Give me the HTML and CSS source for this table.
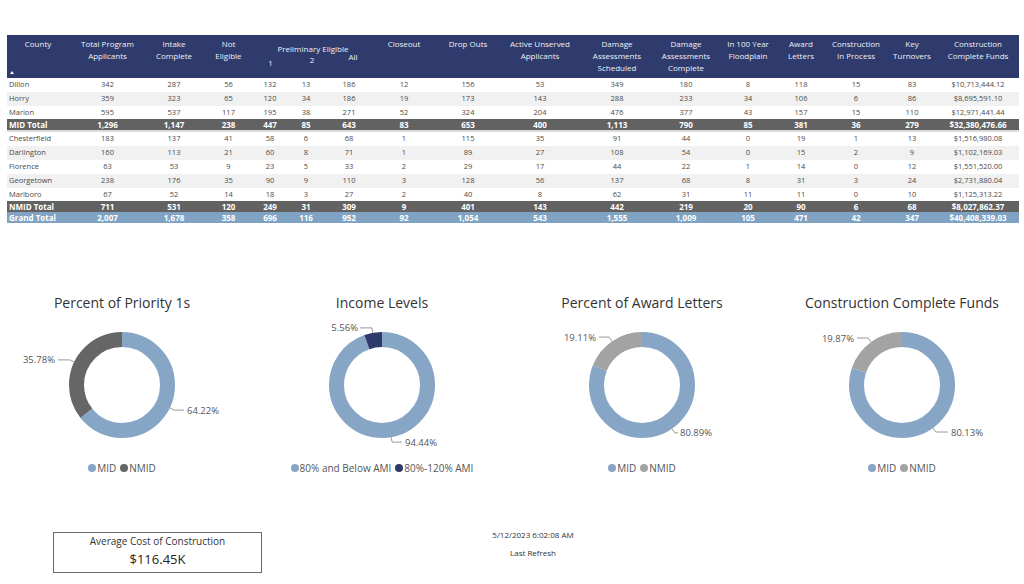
FILE: index.html
```html
<!DOCTYPE html>
<html lang="en">
<head>
<meta charset="utf-8">
<title>Program Dashboard</title>
<link rel="stylesheet" href="styles.css">
</head>
<body>
<section class="matrix">
  <div class="row head">
    <div class="h county"><span>County</span><span class="sort"></span></div>
    <div class="h">Total Program<br>Applicants</div>
    <div class="h">Intake<br>Complete</div>
    <div class="h">Not<br>Eligible</div>
    <div class="group">
      <div class="gtitle">Preliminary Eligible</div>
      <div class="sub">
        <span class="s1">1</span><span class="s2">2</span><span class="s3">All</span>
      </div>
    </div>
    <div class="h">Closeout</div>
    <div class="h">Drop Outs</div>
    <div class="h">Active Unserved<br>Applicants</div>
    <div class="h">Damage<br>Assessments<br>Scheduled</div>
    <div class="h">Damage<br>Assessments<br>Complete</div>
    <div class="h">In 100 Year<br>Floodplain</div>
    <div class="h">Award<br>Letters</div>
    <div class="h">Construction<br>In Process</div>
    <div class="h">Key<br>Turnovers</div>
    <div class="h">Construction<br>Complete Funds</div>
  </div>

  <div class="row r"><span>Dillon</span><span>342</span><span>287</span><span>56</span><span>132</span><span>13</span><span>186</span><span>12</span><span>156</span><span>53</span><span>349</span><span>180</span><span>8</span><span>118</span><span>15</span><span>83</span><span>$10,713,444.12</span></div>
  <div class="row r alt"><span>Horry</span><span>359</span><span>323</span><span>65</span><span>120</span><span>34</span><span>186</span><span>19</span><span>173</span><span>143</span><span>288</span><span>233</span><span>34</span><span>106</span><span>6</span><span>86</span><span>$8,695,591.10</span></div>
  <div class="row r"><span>Marion</span><span>595</span><span>537</span><span>117</span><span>195</span><span>38</span><span>271</span><span>52</span><span>324</span><span>204</span><span>476</span><span>377</span><span>43</span><span>157</span><span>15</span><span>110</span><span>$12,971,441.44</span></div>
  <div class="row tot midtot"><span>MID Total</span><span>1,296</span><span>1,147</span><span>238</span><span>447</span><span>85</span><span>643</span><span>83</span><span>653</span><span>400</span><span>1,113</span><span>790</span><span>85</span><span>381</span><span>36</span><span>279</span><span>$32,380,476.66</span></div>
  <div class="row r"><span>Chesterfield</span><span>183</span><span>137</span><span>41</span><span>58</span><span>6</span><span>68</span><span>1</span><span>115</span><span>35</span><span>91</span><span>44</span><span>0</span><span>19</span><span>1</span><span>13</span><span>$1,516,980.08</span></div>
  <div class="row r alt"><span>Darlington</span><span>160</span><span>113</span><span>21</span><span>60</span><span>8</span><span>71</span><span>1</span><span>89</span><span>27</span><span>108</span><span>54</span><span>0</span><span>15</span><span>2</span><span>9</span><span>$1,102,169.03</span></div>
  <div class="row r"><span>Florence</span><span>63</span><span>53</span><span>9</span><span>23</span><span>5</span><span>33</span><span>2</span><span>29</span><span>17</span><span>44</span><span>22</span><span>1</span><span>14</span><span>0</span><span>12</span><span>$1,551,520.00</span></div>
  <div class="row r alt"><span>Georgetown</span><span>238</span><span>176</span><span>35</span><span>90</span><span>9</span><span>110</span><span>3</span><span>128</span><span>56</span><span>137</span><span>68</span><span>8</span><span>31</span><span>3</span><span>24</span><span>$2,731,880.04</span></div>
  <div class="row r"><span>Marlboro</span><span>67</span><span>52</span><span>14</span><span>18</span><span>3</span><span>27</span><span>2</span><span>40</span><span>8</span><span>62</span><span>31</span><span>11</span><span>11</span><span>0</span><span>10</span><span>$1,125,313.22</span></div>
  <div class="row tot"><span>NMID Total</span><span>711</span><span>531</span><span>120</span><span>249</span><span>31</span><span>309</span><span>9</span><span>401</span><span>143</span><span>442</span><span>219</span><span>20</span><span>90</span><span>6</span><span>68</span><span>$8,027,862.37</span></div>
  <div class="row tot grand"><span>Grand Total</span><span>2,007</span><span>1,678</span><span>358</span><span>696</span><span>116</span><span>952</span><span>92</span><span>1,054</span><span>543</span><span>1,555</span><span>1,009</span><span>105</span><span>471</span><span>42</span><span>347</span><span>$40,408,339.03</span></div>
</section>

<section class="charts">
  <div class="chart">
    <div class="ctitle">Percent of Priority 1s</div>
    <svg class="donut" width="230" height="148" viewBox="0 0 230 148">
      <g transform="rotate(-90 115 72)">
        <circle cx="115" cy="72" r="45.5" class="seg blue" stroke-dasharray="183.60 285.885"/>
        <circle cx="115" cy="72" r="45.5" class="seg dgray" stroke-dasharray="102.29 285.885" stroke-dashoffset="-183.60"/>
      </g>
      <polyline class="lead" points="67.2,49.1 62.7,46.9 51,46.9"/>
      <text class="lbl" x="48" y="46.9" text-anchor="end">35.78%</text>
      <polyline class="lead" points="162.8,94.9 167.3,97.1 177,97.1"/>
      <text class="lbl" x="180" y="97.1">64.22%</text>
    </svg>
    <div class="legend">
      <span class="li"><i class="dot blue-bg"></i>MID</span>
      <span class="li"><i class="dot dgray-bg"></i>NMID</span>
    </div>
  </div>

  <div class="chart">
    <div class="ctitle">Income Levels</div>
    <svg class="donut" width="230" height="148" viewBox="0 0 230 148">
      <g transform="rotate(-90 115 72)">
        <circle cx="115" cy="72" r="45.5" class="seg blue" stroke-dasharray="269.99 285.885"/>
        <circle cx="115" cy="72" r="45.5" class="seg navy" stroke-dasharray="15.90 285.885" stroke-dashoffset="-269.99"/>
      </g>
      <polyline class="lead" points="105.8,19.8 104.9,14.9 93,14.9"/>
      <text class="lbl" x="91" y="14.9" text-anchor="end">5.56%</text>
      <polyline class="lead" points="124.2,124.2 125.1,129.1 135,129.1"/>
      <text class="lbl" x="138" y="129.1">94.44%</text>
    </svg>
    <div class="legend">
      <span class="li"><i class="dot blue-bg"></i>80% and Below AMI</span>
      <span class="li"><i class="dot navy-bg"></i>80%-120% AMI</span>
    </div>
  </div>

  <div class="chart">
    <div class="ctitle">Percent of Award Letters</div>
    <svg class="donut" width="230" height="148" viewBox="0 0 230 148">
      <g transform="rotate(-90 115 72)">
        <circle cx="115" cy="72" r="45.5" class="seg blue" stroke-dasharray="231.25 285.885"/>
        <circle cx="115" cy="72" r="45.5" class="seg lgray" stroke-dasharray="54.63 285.885" stroke-dashoffset="-231.25"/>
      </g>
      <polyline class="lead" points="85.1,28.3 82.2,24.1 72,24.1"/>
      <text class="lbl" x="69" y="24.1" text-anchor="end">19.11%</text>
      <polyline class="lead" points="144.9,115.7 147.8,119.9 151,119.9"/>
      <text class="lbl" x="153" y="119.9">80.89%</text>
    </svg>
    <div class="legend">
      <span class="li"><i class="dot blue-bg"></i>MID</span>
      <span class="li"><i class="dot lgray-bg"></i>NMID</span>
    </div>
  </div>

  <div class="chart">
    <div class="ctitle">Construction Complete Funds</div>
    <svg class="donut" width="230" height="148" viewBox="0 0 230 148">
      <g transform="rotate(-90 115 72)">
        <circle cx="115" cy="72" r="45.5" class="seg blue" stroke-dasharray="229.08 285.885"/>
        <circle cx="115" cy="72" r="45.5" class="seg lgray" stroke-dasharray="56.81 285.885" stroke-dashoffset="-229.08"/>
      </g>
      <polyline class="lead" points="84.0,29.0 81.1,25.0 70,25.0"/>
      <text class="lbl" x="67" y="25.0" text-anchor="end">19.87%</text>
      <polyline class="lead" points="146.0,115.0 148.9,119.0 161,119.0"/>
      <text class="lbl" x="164" y="119.0">80.13%</text>
    </svg>
    <div class="legend">
      <span class="li"><i class="dot blue-bg"></i>MID</span>
      <span class="li"><i class="dot lgray-bg"></i>NMID</span>
    </div>
  </div>
</section>

<section class="bottom">
  <div class="card">
    <div class="card-title">Average Cost of Construction</div>
    <div class="card-value">$116.45K</div>
  </div>
  <div class="refresh">
    <div class="stamp">5/12/2023 6:02:08 AM</div>
    <div class="stamp-label">Last Refresh</div>
  </div>
</section>
</body>
</html>
```
FILE: styles.css
```css
* { box-sizing: border-box; margin: 0; padding: 0; }

html, body {
  width: 1024px;
  height: 584px;
  overflow: hidden;
  background: #ffffff;
}

body {
  font-family: "Open Sans", "Noto Sans", "Liberation Sans", sans-serif;
  color: #333333;
}

/* ---------- Matrix table ---------- */
.matrix {
  margin: 35px 0 0 7px;
  width: 1012px;
}

.row {
  display: grid;
  grid-template-columns: 62px 77px 56px 53px 30px 42px 44px 66px 62px 82px 72px 66px 58px 48px 62px 50px 82px;
}

.head {
  height: 43px;
  background: #2f3b6c;
  color: #eef0f5;
  font-size: 8px;
  line-height: 12px;
}

.head .h {
  text-align: center;
  padding-top: 3px;
  white-space: nowrap;
}

.head .county {
  display: flex;
  flex-direction: column;
  justify-content: space-between;
  align-items: center;
  padding-bottom: 4px;
}

.sort {
  align-self: flex-start;
  margin-left: 3px;
  width: 0;
  height: 0;
  border-left: 2.5px solid transparent;
  border-right: 2.5px solid transparent;
  border-bottom: 3px solid #ffffff;
}

.group {
  grid-column: span 3;
  padding-top: 8px;
  text-align: center;
}

.gtitle { white-space: nowrap; }

.sub {
  display: grid;
  grid-template-columns: 30px 42px 44px;
}

.sub span { text-align: center; }
.sub .s1 { margin-top: 2px; padding-left: 1px; }
.sub .s2 { margin-top: -1px; padding-left: 12px; }
.sub .s3 { margin-top: -4px; padding-left: 8px; }

.r {
  height: 13.8px;
  line-height: 13.8px;
  font-size: 7.5px;
  color: #4a4a4a;
}

.r span, .tot span {
  text-align: center;
  white-space: nowrap;
}

.r span:first-child, .tot span:first-child {
  text-align: left;
  padding-left: 2px;
}

.alt { background: #f1f1f1; }

.tot {
  height: 11px;
  line-height: 11px;
  background: #626262;
  color: #ffffff;
  font-size: 8px;
  font-weight: 700;
}

.midtot {
  height: 13px;
  border-bottom: 2px solid #dcdcdc;
}

.grand { background: #80a3c4; }

/* ---------- Charts ---------- */
.charts {
  display: flex;
  gap: 30px;
  margin: 70px 0 0 7px;
}

.chart {
  width: 230px;
  display: flex;
  flex-direction: column;
  align-items: center;
}

.ctitle {
  font-size: 14px;
  line-height: 20px;
  color: #333333;
  white-space: nowrap;
}

.donut { display: block; }

.seg {
  fill: none;
  stroke-width: 15;
}

.blue  { stroke: #87a6c6; }
.dgray { stroke: #666666; }
.lgray { stroke: #a3a3a3; }
.navy  { stroke: #2d3a6b; }

.lead {
  fill: none;
  stroke: #9a9a9a;
  stroke-width: 1;
}

.lbl {
  font-family: "Open Sans", "Noto Sans", sans-serif;
  font-size: 9.5px;
  fill: #555555;
  dominant-baseline: central;
}

.legend {
  display: flex;
  gap: 4px;
  font-size: 10px;
  line-height: 14px;
  color: #555555;
  white-space: nowrap;
}

.li {
  display: flex;
  align-items: center;
  gap: 1px;
}

.dot {
  display: inline-block;
  width: 8px;
  height: 8px;
  border-radius: 50%;
}

.blue-bg  { background: #87a6c6; }
.dgray-bg { background: #666666; }
.lgray-bg { background: #a3a3a3; }
.navy-bg  { background: #2d3a6b; }

/* ---------- Bottom ---------- */
.bottom {
  display: flex;
  align-items: flex-start;
  margin-top: 54px;
}

.card {
  margin: 3px 0 0 53px;
  width: 209px;
  height: 41px;
  border: 1px solid #6a6a6a;
  padding-top: 1px;
  text-align: center;
}

.card-title {
  font-size: 10px;
  line-height: 14px;
  color: #333333;
}

.card-value {
  margin-top: 2px;
  font-size: 13px;
  line-height: 18px;
  color: #252423;
}

.refresh {
  margin-left: 171px;
  width: 200px;
  text-align: center;
  font-size: 8px;
  line-height: 12px;
  color: #333333;
}

.stamp-label { margin-top: 6px; }
```
